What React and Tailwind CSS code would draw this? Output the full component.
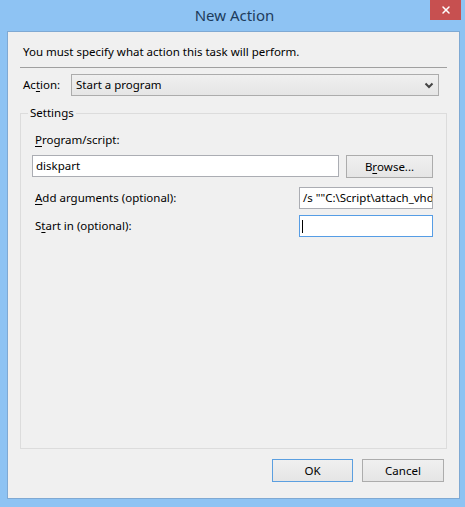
import { X } from 'lucide-react'

const FONT = { fontFamily: '"Noto Sans", "Segoe UI", sans-serif' }

// lettre soulignée (touche d'accès)
function U({ children }) {
  return <span className="underline underline-offset-2">{children}</span>
}

function Button({ children, primary, className = '' }) {
  return (
    <div
      className={`flex h-[23px] items-center justify-center border bg-gradient-to-b from-[#f0f0f0] to-[#e5e5e5] text-[11.5px] text-black ${
        primary ? 'border-[#5b9fe0]' : 'border-[#acacac]'
      } ${className}`}
    >
      {children}
    </div>
  )
}

function Input({ value, focused, className = '' }) {
  return (
    <div
      className={`flex h-[22px] items-center overflow-hidden whitespace-nowrap border bg-white pl-[3px] text-[11.5px] text-black ${
        focused ? 'border-[#569de5]' : 'border-[#abadb3]'
      } ${className}`}
    >
      {value}
      {focused && <span className="ml-[-1px] inline-block h-[13px] w-px bg-black" />}
    </div>
  )
}

export default function App() {
  return (
    <div className="flex h-[507px] w-[465px] flex-col bg-[#8ec3f3]" style={FONT}>
      {/* barre de titre */}
      <div className="relative flex h-[31px] shrink-0 items-center justify-center pl-[4px]">
        <span className="text-[15px] text-[#1d3b5c]">New Action</span>
        <div className="absolute right-[4px] top-0 flex h-[20px] w-[31px] items-center justify-center bg-[#c75050]">
          <X size={12} strokeWidth={3} className="text-white" />
        </div>
      </div>

      <div className="ml-[7px] mr-[5px] flex flex-1 flex-col border border-[#7fa9d3] bg-[#f0f0f0] px-[12px] text-[11.5px] text-black">
        <div className="mt-[12px] pl-[3px] leading-[16px]">You must specify what action this task will perform.</div>

        <div className="mt-[7px] border-t border-[#a0a0a0]" />

        <div className="mt-[6px] flex h-[22px] items-center pl-[3px] pr-[8px]">
          <span className="w-[48px] shrink-0">Ac<U>t</U>ion:</span>
          <div className="flex h-[22px] flex-1 items-center justify-between border border-[#acacac] bg-gradient-to-b from-[#f0f0f0] to-[#e5e5e5] pl-[4px] pr-[4px]">
            <span>Start a program</span>
            <svg width="10" height="7" viewBox="0 0 10 7">
              <path d="M1.5 1.5 L5 5 L8.5 1.5" fill="none" stroke="#444" strokeWidth="2" />
            </svg>
          </div>
        </div>

        <fieldset className="mt-[9px] h-[344px] border border-[#dcdcdc] pl-[11px] pr-[12px]">
          <legend className="ml-[-4px] px-[2px] leading-[16px]">Settings</legend>

          <div className="mt-[11px] pl-[3px] leading-[16px]">
            <U>P</U>rogram/script:
          </div>
          <div className="mt-[7px] flex items-start gap-[7px]">
            <Input value="diskpart" className="w-[307px]" />
            <Button className="w-[87px]">
              B<U>r</U>owse...
            </Button>
          </div>

          <div className="mt-[9px] flex items-center justify-between">
            <span className="pl-[3px]">
              <U>A</U>dd arguments (optional):
            </span>
            <Input value={'/s ""C:\\Script\\attach_vhd.txt""'} className="mr-[1px] w-[134px]" />
          </div>

          <div className="mt-[6px] flex items-center justify-between">
            <span className="pl-[3px]">
              S<U>t</U>art in (optional):
            </span>
            <Input value="" focused className="mr-[1px] w-[134px]" />
          </div>
        </fieldset>

        <div className="mt-[10px] flex justify-end gap-[9px] pr-[3px]">
          <Button primary className="w-[81px]">OK</Button>
          <Button className="w-[82px]">Cancel</Button>
        </div>
      </div>
      <div className="h-[8px] shrink-0" />
    </div>
  )
}
